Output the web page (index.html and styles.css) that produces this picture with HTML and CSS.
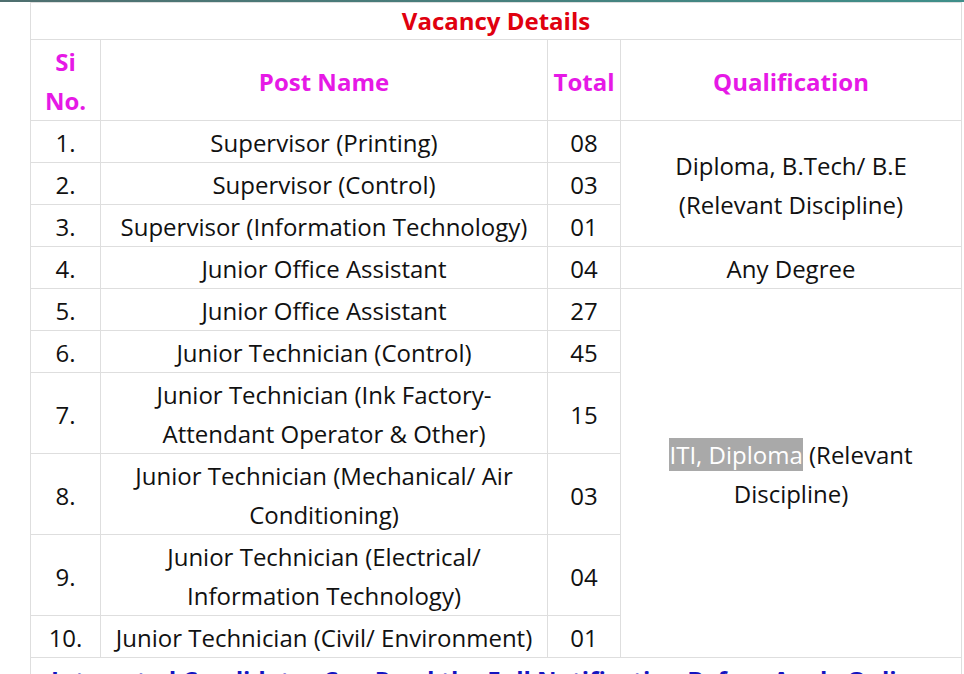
FILE: index.html
```html
<!DOCTYPE html>
<html>
<head>
<meta charset="utf-8">
<link rel="stylesheet" href="styles.css">
</head>
<body>
<div class="topline"></div>
<div class="page">
<table class="vacancy">
<colgroup>
<col class="c-si"><col class="c-post"><col class="c-total"><col class="c-qual">
</colgroup>
<tr><td colspan="4" class="title">Vacancy Details</td></tr>
<tr class="head"><th>Si<br>No.</th><th>Post Name</th><th>Total</th><th>Qualification</th></tr>
<tr><td>1.</td><td>Supervisor (Printing)</td><td>08</td><td rowspan="3">Diploma, B.Tech/ B.E<br>(Relevant Discipline)</td></tr>
<tr><td>2.</td><td>Supervisor (Control)</td><td>03</td></tr>
<tr><td>3.</td><td>Supervisor (Information Technology)</td><td>01</td></tr>
<tr><td>4.</td><td>Junior Office Assistant</td><td>04</td><td>Any Degree</td></tr>
<tr><td>5.</td><td>Junior Office Assistant</td><td>27</td><td rowspan="6"><span class="sel">ITI, Diploma</span> (Relevant<br>Discipline)</td></tr>
<tr><td>6.</td><td>Junior Technician (Control)</td><td>45</td></tr>
<tr><td>7.</td><td>Junior Technician (Ink Factory-<br>Attendant Operator &amp; Other)</td><td>15</td></tr>
<tr><td>8.</td><td>Junior Technician (Mechanical/ Air<br>Conditioning)</td><td>03</td></tr>
<tr><td>9.</td><td>Junior Technician (Electrical/<br>Information Technology)</td><td>04</td></tr>
<tr><td>10.</td><td>Junior Technician (Civil/ Environment)</td><td>01</td></tr>
<tr><td colspan="4" class="foot">Interested Candidates Can Read the Full Notification Before Apply Online</td></tr>
</table>
</div>
</body>
</html>
```
FILE: styles.css
```css
html, body {
  margin: 0;
  padding: 0;
  background: #ffffff;
}
body {
  font-family: "Open Sans", "Noto Sans", sans-serif;
  color: #111111;
  overflow: hidden;
  height: 674px;
}
.topline {
  height: 2px;
  background: linear-gradient(90deg, #4f6f6f, #3f8f8a);
}
.page {
  padding-left: 30px;
  width: 932px;
}
.vacancy {
  border-collapse: collapse;
  width: 931px;
  table-layout: fixed;
}
.c-si { width: 70px; }
.c-post { width: 447px; }
.c-total { width: 73px; }
.c-qual { width: 341px; }
.vacancy td, .vacancy th {
  border: 1px solid #dedede;
  text-align: center;
  vertical-align: middle;
  font-size: 24px;
  line-height: 39px;
  padding: 2px 2px 0;
  font-weight: 400;
}
.vacancy .title {
  color: #e0000f;
  font-weight: 700;
  line-height: 36px;
  padding: 0 4px;
}
.vacancy .head th {
  color: #e619e6;
  font-weight: 700;
}
.sel {
  background: #a9a9a9;
  color: #ffffff;
}
.vacancy .foot {
  color: #1515c0;
  font-weight: 700;
  font-size: 24px;
  text-align: left;
  padding-left: 20px;
  line-height: 40px;
  white-space: nowrap;
  overflow: hidden;
}
```
